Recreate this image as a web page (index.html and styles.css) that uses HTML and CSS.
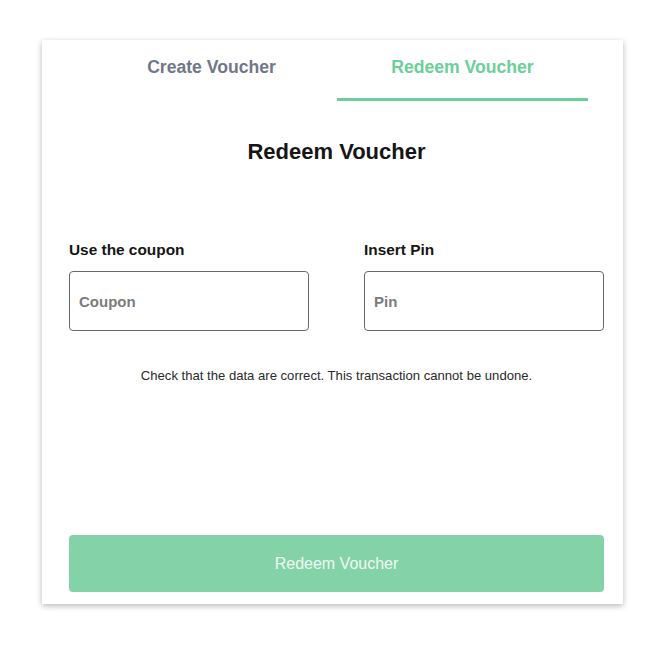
FILE: index.html
```html
<!DOCTYPE html>
<html>
<head>
<meta charset="utf-8">
<link rel="stylesheet" href="styles.css">
</head>
<body>
<div class="card">
  <div class="tabs">
    <div class="tab">Create Voucher</div>
    <div class="tab active">Redeem Voucher</div>
  </div>
  <h1 class="title">Redeem Voucher</h1>
  <div class="fields">
    <div class="field">
      <label class="label">Use the coupon</label>
      <input class="input" placeholder="Coupon">
    </div>
    <div class="field">
      <label class="label">Insert Pin</label>
      <input class="input" placeholder="Pin">
    </div>
  </div>
  <p class="note">Check that the data are correct. This transaction cannot be undone.</p>
  <button class="btn">Redeem Voucher</button>
</div>
</body>
</html>
```
FILE: styles.css
```css
html, body {
  margin: 0;
  padding: 0;
  background: #ffffff;
  font-family: "Liberation Sans", Arial, sans-serif;
}
body {
  padding: 40px 0 41px 42px;
  min-height: 645px;
  box-sizing: border-box;
}
.card {
  box-sizing: border-box;
  width: 581px;
  height: 564px;
  background: #fff;
  box-shadow: 0 2px 6px rgba(0,0,0,0.28);
  padding: 0 19px 12px 27px;
  display: flex;
  flex-direction: column;
}
.tabs {
  display: flex;
  margin: 0 16px 0 17px;
}
.tab {
  flex: 1;
  height: 54px;
  padding-bottom: 4px;
  display: flex;
  align-items: center;
  justify-content: center;
  font-size: 17.6px;
  font-weight: bold;
  color: #717788;
  border-bottom: 3px solid transparent;
}
.tab.active {
  color: #6bcf98;
  border-bottom-color: #6bcf98;
}
.title {
  margin: 39px 0 0;
  text-align: center;
  font-size: 22px;
  font-weight: bold;
  color: #151515;
  line-height: 24px;
}
.fields {
  display: flex;
  gap: 55px;
  margin-top: 77px;
}
.field {
  flex: 1;
  display: flex;
  flex-direction: column;
}
.label {
  font-size: 15.4px;
  font-weight: bold;
  color: #151515;
  line-height: 18px;
  margin-bottom: 12px;
}
.input {
  box-sizing: border-box;
  height: 60px;
  border: 1px solid #666a70;
  border-radius: 4px;
  padding: 0 9px;
  font-family: "Liberation Sans", Arial, sans-serif;
  font-size: 15px;
  font-weight: bold;
  outline: none;
}
.input::placeholder {
  color: #7c7c7c;
}
.note {
  margin: 37px 0 0;
  text-align: center;
  font-size: 13.1px;
  color: #2a2a2a;
  line-height: 16px;
}
.btn {
  margin-top: auto;
  height: 57px;
  border: none;
  border-radius: 4px;
  background: #84d3a8;
  color: #eefaf3;
  font-family: "Liberation Sans", Arial, sans-serif;
  font-size: 16px;
}
```
